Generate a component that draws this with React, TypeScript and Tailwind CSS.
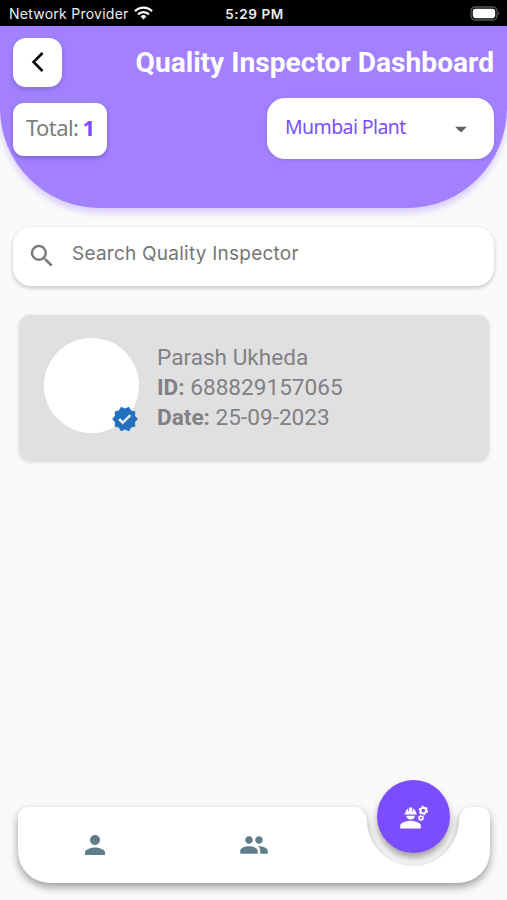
import React from "react";
import {
  MdArrowDropDown,
  MdPeople,
  MdPerson,
  MdSearch,
  MdVerified,
} from "react-icons/md";

function StatusBar() {
  return (
    <div className="grid h-[26px] shrink-0 grid-cols-[1fr_auto_1fr] items-center bg-black pl-[9px] pr-[7px] pt-[2px] font-['Inter',sans-serif] text-[13px] leading-none text-[#eeeeee]">
      <div className="flex items-center gap-[5px] whitespace-nowrap">
        <span className="pb-px text-[14px] tracking-[0.25px]">Network Provider</span>
        <svg className="mb-[3px]" width="19" height="14" viewBox="0 0 19 14" fill="none" stroke="white" strokeWidth="2.3">
          <path d="M1 5.2a12 12 0 0 1 17 0" />
          <path d="M4.1 8.4a7.7 7.7 0 0 1 10.8 0" />
          <path d="M6.6 10.4a4.2 4.2 0 0 1 5.8 0L9.5 13.5z" fill="white" stroke="none" />
        </svg>
      </div>
      <span className="pt-px text-[13.5px] font-semibold tracking-[0.6px]">5:29 PM</span>
      <svg className="mb-[2px] justify-self-end" width="30" height="15" viewBox="0 0 30 15">
        <rect x="1" y="1" width="26" height="13" rx="4" fill="none" stroke="#555" strokeWidth="1.3" />
        <rect x="2.8" y="2.8" width="22.4" height="9.4" rx="2.4" fill="white" />
        <path d="M28.2 5.2q2 2.2 0 4.4z" fill="#666" />
      </svg>
    </div>
  );
}

function Header() {
  return (
    <header className="h-[182px] shrink-0 rounded-b-[100px] bg-[#a280ff] px-[13px] pt-3 shadow-[0_5px_6px_rgba(124,77,255,0.25)]">
      <div className="flex items-center justify-between">
        <button className="flex size-[49px] items-center justify-center rounded-[13px] bg-white shadow-[0_2px_5px_rgba(0,0,0,0.18)]">
          <svg className="mb-px" width="14" height="22" viewBox="0 0 14 22" fill="none" stroke="black" strokeWidth="2.5">
            <path d="M11.5 2 2.5 11 11.5 20" />
          </svg>
        </button>
        <h1 className="whitespace-nowrap font-['Roboto',sans-serif] text-[28.15px] font-bold leading-[32px] text-white">
          Quality Inspector Dashboard
        </h1>
      </div>
      <div className="mt-[11px] flex justify-between">
        <div className="mt-[5px] flex h-[53px] w-[94px] items-center rounded-[11px] bg-white pb-1 pl-[13px] font-['Noto_Sans',sans-serif] text-[22px] tracking-[-0.6px] text-[#7d7d7d] shadow-[0_2px_4px_rgba(0,0,0,0.22)]">
          <span className="whitespace-pre">Total: </span>
          <b className="-ml-px font-bold text-[#7c4dff]">1</b>
        </div>
        <div className="flex h-[61px] w-[227px] items-center justify-between rounded-[18px] bg-white pl-[18px] pr-[19px] font-['Noto_Sans',sans-serif] text-[19.5px] tracking-[-0.6px] text-[#7c4dff] shadow-[0_1px_4px_rgba(0,0,0,0.1)]">
          <span className="pb-[3px]">Mumbai Plant</span>
          <MdArrowDropDown size={28} color="#616161" />
        </div>
      </div>
    </header>
  );
}

function SearchBox() {
  return (
    <div className="mx-[13px] mt-[19px] flex h-[59px] shrink-0 items-center rounded-[18px] bg-white pl-[14px] shadow-[0_2px_4px_rgba(0,0,0,0.22)]">
      <MdSearch size={30} color="#7b7b7b" className="mb-px" />
      <span className="pb-1 pl-[15px] font-['Inter',sans-serif] text-[19px] tracking-[0.24px] text-[#757575]">
        Search Quality Inspector
      </span>
    </div>
  );
}

function InspectorCard() {
  return (
    <article className="ml-[19px] mr-[18px] mt-[29px] flex h-[146px] shrink-0 rounded-[11px] bg-[#e0e0e0] pl-[25px] pt-[23px] shadow-[0_1px_4px_rgba(0,0,0,0.14)]">
      <div className="relative size-[95px] rounded-full bg-white">
        <MdVerified size={28} color="#236fbd" className="absolute bottom-0 right-0" />
      </div>
      <div className="pl-[18px] pt-[5px] font-['Roboto',sans-serif] text-[22.6px] leading-[29.8px] text-[#808086]">
        <p>Parash Ukheda</p>
        <p><b>ID:</b> 688829157065</p>
        <p><b>Date:</b> 25-09-2023</p>
      </div>
    </article>
  );
}

function EngineerIcon() {
  return (
    <svg width="30" height="24" viewBox="0 0 30 24" fill="white">
      <path d="M1.2 23.4v-2.6c0-3.4 6.8-5 10.3-5s10.4 1.6 10.4 5v2.6z" />
      <path d="M7.1 10.8h9a4.6 4.6 0 0 1-9 0z" />
      <path d="M5.4 9.6V8.4h.9c.1-2.3 1.2-4.1 2.9-5v2.8h.9V2.6h3.2v3.6h.9V3.4c1.7.9 2.7 2.7 2.8 5h.9v1.2z" />
      <g fill="none" stroke="white">
        <circle cx="24.3" cy="5.6" r="2.8" strokeWidth="1.9" />
        <circle cx="24.3" cy="5.6" r="4" strokeWidth="1.5" strokeDasharray="2.1 2.09" />
        <circle cx="22" cy="13" r="1.8" strokeWidth="1.4" />
        <circle cx="22" cy="13" r="2.7" strokeWidth="1" strokeDasharray="1.41 1.417" />
      </g>
    </svg>
  );
}

function BottomNav() {
  return (
    <nav className="relative mb-[17px] ml-[18px] mr-[17px] mt-auto h-[76px] shrink-0">
      <div className="h-full drop-shadow-[0_4px_4px_rgba(0,0,0,0.38)]">
        <div className="grid h-full grid-cols-[153px_166px_1fr] items-center justify-items-center bg-white text-[#607d8b] [clip-path:path('M12,0H336Q346,0,349,13A46,46,0,0,0,441,13Q443,0,454,0H460Q472,0,472,12V44A32,32,0,0,1,440,76H32A32,32,0,0,1,0,44V12Q0,0,12,0Z')]">
          <MdPerson size={30} />
          <MdPeople size={30} />
        </div>
      </div>
      <button className="absolute left-[359px] top-[-27px] flex size-[73px] items-center justify-center rounded-full bg-[#7c4dff] text-white shadow-[0_5px_7px_rgba(0,0,0,0.35)]">
        <EngineerIcon />
      </button>
    </nav>
  );
}

export default function App() {
  return (
    <main className="flex h-[900px] w-[507px] flex-col overflow-hidden bg-[#fafafa]">
      <StatusBar />
      <Header />
      <SearchBox />
      <InspectorCard />
      <BottomNav />
    </main>
  );
}
